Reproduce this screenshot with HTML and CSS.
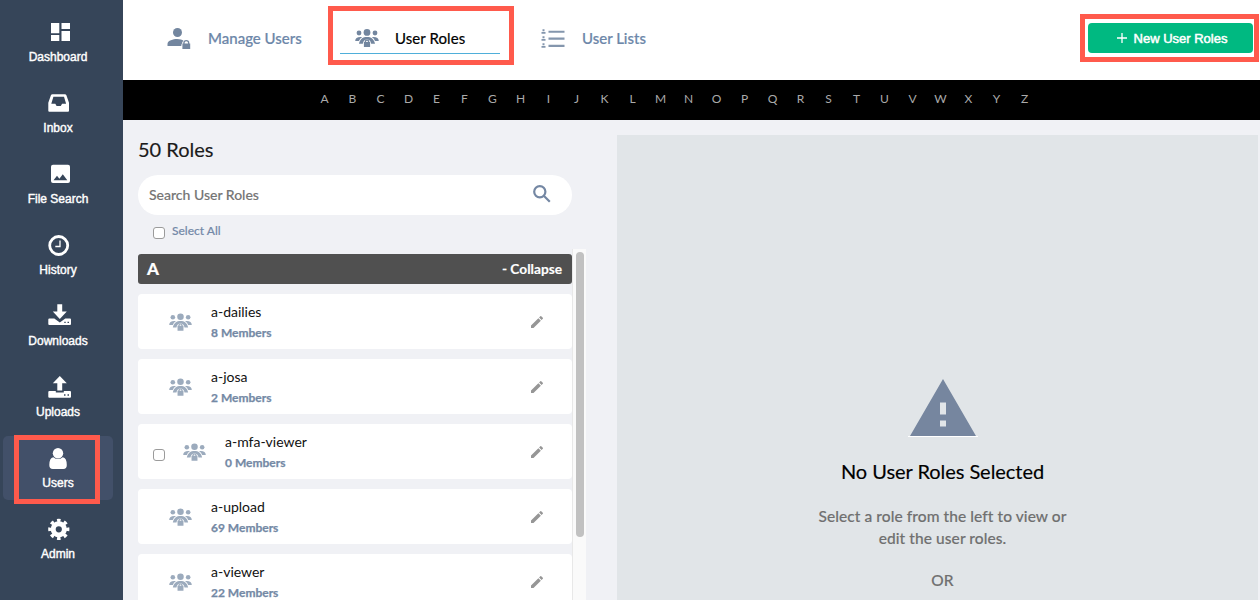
FILE: index.html
```html
<!DOCTYPE html>
<html lang="en">
<head>
<meta charset="utf-8">
<title>User Roles</title>
<link rel="stylesheet" href="styles.css">
</head>
<body>
<svg class="defs" aria-hidden="true">
  <symbol id="group" viewBox="0 0 24 18">
    <circle cx="4" cy="4" r="2.4"/><circle cx="12" cy="3.4" r="3.4"/><circle cx="20" cy="4" r="2.4"/>
    <path d="M.2 12C.3 9.200 2.500 7.600 7.200 8.100Q4.800 9.500 4 12ZM23.800 12C23.700 9.200 21.500 7.600 16.800 8.100Q19.200 9.500 20 12Z"/>
    <path d="M4 14.700C5 9.800 8 7.900 12 7.900s7 1.900 8 6.800h-3.800C15.600 11.700 14.200 10.600 12 10.600s-3.600 1.100-4.200 4.100Z"/>
    <path fill-rule="evenodd" d="M9.700 13v-.4a2.300 2.100 0 0 1 4.600 0v.4h.8v5H8.900V13Zm1.400 0h1.800v-.4a.9.900 0 0 0-1.800 0Z"/>
  </symbol>
  <symbol id="pencil" viewBox="0 0 24 24"><path d="M3 17.250V21h3.750L17.810 9.940l-3.750-3.750L3 17.250zM20.710 7.040a1 1 0 0 0 0-1.410l-2.340-2.340a1 1 0 0 0-1.410 0l-1.830 1.830 3.750 3.750 1.830-1.830z"/></symbol>
</svg>
<div class="app">
  <nav class="sidebar">
    <a class="nav"><svg viewBox="0 0 28 24"><path d="M7 3h8.300v10.300H7zM7 15h8.300v6H7zM17.500 3H26v6h-8.500zM17.500 11H26v10h-8.500z"/></svg><span>Dashboard</span></a>
    <a class="nav"><svg viewBox="0 0 28 24"><path fill-rule="evenodd" d="M8.500 3.300h12.300q1.200 0 1.600 1L25 11.700v8q0 1-1 1H5.300q-1 0-1-1v-8l2.600-7.400q.4-1 1.600-1zM9.400 5.800 7.300 12.700h4l1.300 2.300h4.200l1.300-2.300h4L20 5.800z"/></svg><span>Inbox</span></a>
    <a class="nav"><svg viewBox="0 0 28 24"><path fill-rule="evenodd" d="M9 2.700h15q2 0 2 2V19q0 2-2 2H9q-2 0-2-2V4.700q0-2 2-2zM9.500 18.200h13.800l-4.500-6-3.400 4.500-2.400-2.900z"/></svg><span>File Search</span></a>
    <a class="nav"><svg viewBox="0 0 28 24"><circle class="ring" cx="14.700" cy="12.500" r="9"/><path class="hands" d="M16 7.500v6h-4.700"/></svg><span>History</span></a>
    <a class="nav"><svg viewBox="0 0 28 24"><path d="M13.300.3h4.900v7.200h4.600l-7 7.500-7-7.500h4.500z"/><path fill-rule="evenodd" d="M5.300 14.500h5l5.500 4 5.500-4h4.700q1 0 1 1V20q0 1-1 1H5.300q-1 0-1-1v-4.500q0-1 1-1zM20.300 17.700v1.300h1.400v-1.300zM23.500 17.700v1.300H25v-1.300z"/></svg><span>Downloads</span></a>
    <a class="nav"><svg viewBox="0 0 28 24"><path d="M15.800 1l7 7.200h-4.600v7.300h-4.900V8.200H8.800z"/><path fill-rule="evenodd" d="M5.300 16h6.500v1.500h8V16H26q1 0 1 1v4.700q0 1-1 1H5.300q-1 0-1-1V17q0-1 1-1zM20 19.300v1.400h1.500v-1.400zM23.500 19.300v1.400H25v-1.400z"/></svg><span>Uploads</span></a>
    <a class="nav active"><svg viewBox="0 0 28 24"><circle cx="14" cy="7.200" r="5.200"/><path d="M9.300 11.200Q14 15 18.800 11.200q4 .8 4 7.800 0 4-3.500 4H8.800q-3.500 0-3.500-4 0-7 4-7.800z"/></svg><span>Users</span></a>
    <a class="nav"><svg viewBox="0 0 28 24"><circle class="gear-body" cx="14.800" cy="12.300" r="5.600"/><circle class="gear-teeth" cx="14.800" cy="12.300" r="8.900" pathLength="80"/></svg><span>Admin</span></a>
    <div class="mark mark-users"></div>
  </nav>
  <main class="main">
    <header class="topbar">
      <a class="tab t1"><svg width="24" height="22" viewBox="0 0 24 22"><circle cx="10.500" cy="4.500" r="4.500"/><path d="M.5 18v-2.300C1 12.500 6 11 10 11c3 0 5.200.7 6.500 1.800Q15 14 15 15.500q-.7.500-.7 2.500z"/><path fill-rule="evenodd" d="M16.300 15.500v-.8a3 2.700 0 0 1 6 0v.8h.9V21h-7.800v-5.500zm1.300 0H21v-.7a1.700 1.500 0 0 0-3.400 0z"/></svg><span>Manage Users</span></a>
      <a class="tab t2"><svg width="24" height="18"><use href="#group"/></svg><span>User Roles</span></a>
      <a class="tab t3"><svg width="24" height="20" viewBox="0 0 24 20"><path class="bars" d="M7.500 1.700h16v2.100h-16zM7.500 8.600h16v2.100h-16zM7.500 15.800h16v2.100h-16z"/><path class="bars" d="M1.500.2h2v2h-2zM.5 3h4v1.700h-4zM1.500 7.200h2v2h-2zM.5 10h4v1.700h-4zM1.500 14.200h2v2h-2zM.5 17h4v1.700h-4z"/></svg><span>User Lists</span></a>
      <button class="new"><svg width="10" height="10" viewBox="0 0 10 10"><path d="M5 0v10M0 5h10"/></svg><span>New User Roles</span></button>
      <div class="mark mark-tab"></div>
      <div class="mark mark-new"></div>
    </header>
    <div class="letters"><a>A</a><a>B</a><a>C</a><a>D</a><a>E</a><a>F</a><a>G</a><a>H</a><a>I</a><a>J</a><a>K</a><a>L</a><a>M</a><a>N</a><a>O</a><a>P</a><a>Q</a><a>R</a><a>S</a><a>T</a><a>U</a><a>V</a><a>W</a><a>X</a><a>Y</a><a>Z</a></div>
    <div class="content">
      <section class="roles">
        <h1><span>50 Roles</span></h1>
        <div class="search"><span>Search User Roles</span><svg width="18" height="18" viewBox="0 0 18 18"><circle cx="6.800" cy="6.800" r="5.600"/><path d="M10.800 10.800l6 6"/></svg></div>
        <label class="select-all"><i class="check"></i><span>Select All</span></label>
        <div class="scroller">
          <div class="list">
            <div class="group"><b>A</b><span>- Collapse</span></div>
            <div class="card"><svg class="people"><use href="#group"/></svg><div class="info"><span class="name">a-dailies</span><span class="members">8 Members</span></div><svg class="edit"><use href="#pencil"/></svg></div>
            <div class="card"><svg class="people"><use href="#group"/></svg><div class="info"><span class="name">a-josa</span><span class="members">2 Members</span></div><svg class="edit"><use href="#pencil"/></svg></div>
            <div class="card selectable"><i class="check"></i><svg class="people"><use href="#group"/></svg><div class="info"><span class="name">a-mfa-viewer</span><span class="members">0 Members</span></div><svg class="edit"><use href="#pencil"/></svg></div>
            <div class="card"><svg class="people"><use href="#group"/></svg><div class="info"><span class="name">a-upload</span><span class="members">69 Members</span></div><svg class="edit"><use href="#pencil"/></svg></div>
            <div class="card"><svg class="people"><use href="#group"/></svg><div class="info"><span class="name">a-viewer</span><span class="members">22 Members</span></div><svg class="edit"><use href="#pencil"/></svg></div>
          </div>
          <div class="track"><div class="thumb"></div></div>
        </div>
      </section>
      <section class="panel">
        <svg class="warning" width="70" height="58" viewBox="0 0 70 58"><path fill-rule="evenodd" d="M35 0l33 57H2zM32 23.500v12h6v-12zM32 41.500v6h6v-6z"/><path class="base" d="M0 57h70v1H0z"/></svg>
        <h2>No User Roles Selected</h2>
        <p>Select a role from the left to view or<br>edit the user roles.</p>
        <p class="or">OR</p>
      </section>
    </div>
  </main>
</div>
</body>
</html>
```

FILE: styles.css
```css
* { box-sizing: border-box; }
body { margin: 0; font-family: Lato, "Liberation Sans", sans-serif; background: #f0f1f5; overflow: hidden; }
.defs { display: none; }
.app { display: flex; width: 1260px; height: 600px; overflow: hidden; }
.mark { position: absolute; border: 5px solid #ff5a4c; }

.sidebar { position: relative; flex: none; width: 123px; padding: 10px 10px 0 3px; background: #364559; display: flex; flex-direction: column; gap: 7px; }
.nav { flex: none; height: 64px; padding-top: 10px; display: flex; flex-direction: column; align-items: center; gap: 6px; border-radius: 5px; color: #fff; font: 12px/14px "Liberation Sans", sans-serif; -webkit-text-stroke: .4px #fff; }
.nav svg { width: 28px; height: 24px; fill: #fff; }
.nav.active { background: #425069; }
.nav .ring { fill: none; stroke: #fff; stroke-width: 2.8; }
.nav .hands { fill: none; stroke: #fff; stroke-width: 1.3; }
.nav .gear-body { fill: none; stroke: #fff; stroke-width: 5; }
.nav .gear-teeth { fill: none; stroke: #fff; stroke-width: 3.4; stroke-dasharray: 5 5; stroke-dashoffset: 2.5; }
.mark-users { left: 14px; top: 435px; width: 86px; height: 69px; }

.main { flex: 1; display: flex; flex-direction: column; }
.topbar { position: relative; flex: none; height: 80px; background: #fff; display: flex; padding: 23px 7px 0 30px; }
.tab { height: 31px; display: flex; align-items: center; color: #6d87a9; font-size: 15px; font-weight: 500; -webkit-text-stroke: .2px; }
.tab span { margin-top: -1px; }
.tab svg { fill: #73869f; flex: none; -webkit-text-stroke: 0; }
.t1 { width: 187px; padding-left: 14px; gap: 17px; }
.t1 svg { margin-top: 1px; }
.t2 { width: 160px; padding-left: 15px; gap: 16px; color: #000; font-weight: 400; border-bottom: 1px solid #4fafda; }
.t2 span { letter-spacing: .08px; }
.t3 { margin-left: 41px; gap: 17px; }
.tab .bars { fill: #8496ad; }
.new { margin-left: auto; width: 165px; height: 30px; padding: 0 0 0 3px; border: 0; border-radius: 4px; background: #00b981; color: #fff; display: flex; align-items: center; justify-content: center; gap: 7px; font: 13px "Liberation Sans", sans-serif; -webkit-text-stroke: .5px #fff; }
.new path { stroke: #fff; stroke-width: 1.3; }
.mark-tab { left: 205px; top: 6px; width: 186px; height: 59px; }
.mark-new { left: 957px; top: 14px; width: 179px; height: 48px; }
.letters { flex: none; height: 40px; padding: 0 0 3px 188px; background: #000; display: flex; align-items: center; color: #aaa; font-size: 12px; }
.letters a { width: 28px; padding-right: 1px; text-align: center; }

.content { flex: 1; display: flex; min-height: 0; }
.roles { flex: none; width: 494px; padding: 14px 0 0 15px; display: flex; flex-direction: column; }
h1 { margin: 0; height: 41px; font-size: 20px; line-height: 30px; font-weight: 400; color: #1b1b1b; -webkit-text-stroke: .15px; }
.search { flex: none; width: 434px; height: 40px; border-radius: 20px; background: #fff; display: flex; align-items: center; justify-content: space-between; padding: 0 21px 0 11px; color: #757575; font-size: 14px; font-weight: 500; }
.search span { margin-top: -2px; -webkit-text-stroke: .15px; }
.search svg { fill: none; stroke: #7487a3; stroke-width: 2.2; margin-top: -3px; }
.select-all { height: 34px; padding: 6px 0 0 15px; display: flex; align-items: flex-start; gap: 7px; color: #7489a8; font-size: 12px; line-height: 20px; font-weight: 500; -webkit-text-stroke: .15px; }
.check { flex: none; width: 12px; height: 12px; border: 1px solid #9b9b9b; border-radius: 3px; background: #fff; }
.select-all .check { margin-top: 6px; }
.scroller { flex: 1; display: flex; min-height: 0; overflow: hidden; }
.list { width: 434px; padding-top: 5px; display: flex; flex-direction: column; gap: 10px; }
.group { flex: none; height: 30px; padding: 0 10px 0 9px; border-radius: 3px; background: #505050; color: #fff; display: flex; align-items: center; justify-content: space-between; font-size: 13.700px; font-weight: 700; -webkit-text-stroke: .15px; }
.group b { font-size: 17px; font-weight: 900; }
.group b, .group span { margin-top: -2px; }
.card { flex: none; height: 55px; padding: 0 28px 0 31px; border-radius: 4px; background: #fff; display: flex; align-items: center; }
.card.selectable { padding-left: 15px; }
.selectable .check { margin: 7px 18px 0 0; }
.people { width: 23px; height: 18px; fill: #9cabbd; margin: 0 1px 0 0; flex: none; }
.info { flex: 1; margin-left: 18px; display: flex; flex-direction: column; line-height: 20px; }
.name { font-size: 14px; color: #111; }
.members { margin: 1px 0 -1px; font-size: 12px; font-weight: 700; color: #7489a5; -webkit-text-stroke: .25px; }
.edit { width: 16px; height: 16px; fill: #969696; margin-right: -1px; }
.track { width: 14px; background: #fafafa; border-left: 1px solid #e8e8e8; padding: 3px 2px 0 3px; }
.thumb { height: 285px; width: 8px; border-radius: 4px; background: #c1c1c1; }
.panel { width: 641px; margin-top: 15px; padding: 244px 0 0 10px; background: #e1e5e8; display: flex; flex-direction: column; align-items: center; text-align: center; }
.warning { flex: none; fill: #76869f; }
.warning .base { fill: #fff; }
h2 { margin: 20px 0 20px; font-size: 20px; line-height: 28px; letter-spacing: -.05px; font-weight: 400; color: #000; -webkit-text-stroke: .15px; }
p { margin: 0; font-size: 15.500px; line-height: 22px; letter-spacing: .08px; font-weight: 500; color: #707070; -webkit-text-stroke: .15px; }
.or { margin-top: 20px; }
```
